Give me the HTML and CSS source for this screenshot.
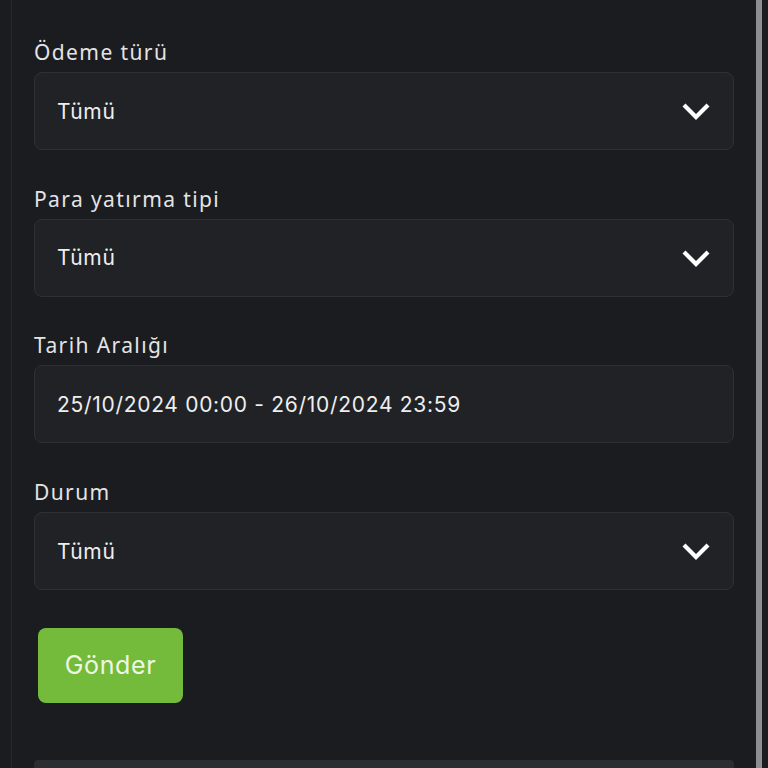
FILE: index.html
```html
<!DOCTYPE html>
<html lang="tr">
<head>
<meta charset="utf-8">
<link rel="stylesheet" href="styles.css">
</head>
<body>
<div class="page">
  <main class="main">
    <form class="form">
      <div class="group">
        <label class="label">Ödeme türü</label>
        <div class="field">
          <span class="value">Tümü</span>
          <svg class="chev" width="30" height="18" viewBox="0 0 30 18"><path d="M3 3 L15 15 L27 3" fill="none" stroke="#ffffff" stroke-width="4.2" stroke-linejoin="miter"/></svg>
        </div>
      </div>
      <div class="group">
        <label class="label">Para yatırma tipi</label>
        <div class="field">
          <span class="value">Tümü</span>
          <svg class="chev" width="30" height="18" viewBox="0 0 30 18"><path d="M3 3 L15 15 L27 3" fill="none" stroke="#ffffff" stroke-width="4.2" stroke-linejoin="miter"/></svg>
        </div>
      </div>
      <div class="group">
        <label class="label">Tarih Aralığı</label>
        <div class="field">
          <span class="value">25/10/2024 00:00 - 26/10/2024 23:59</span>
        </div>
      </div>
      <div class="group">
        <label class="label">Durum</label>
        <div class="field">
          <span class="value">Tümü</span>
          <svg class="chev" width="30" height="18" viewBox="0 0 30 18"><path d="M3 3 L15 15 L27 3" fill="none" stroke="#ffffff" stroke-width="4.2" stroke-linejoin="miter"/></svg>
        </div>
      </div>
      <button type="button" class="submit">Gönder</button>
      <div class="next-box"></div>
    </form>
  </main>
  <div class="scroll-track"><div class="scroll-thumb"></div></div>
</div>
</body>
</html>
```

FILE: styles.css
```css
html, body {
  margin: 0;
  padding: 0;
  background: #1a1c20;
  height: 768px;
  overflow: hidden;
}
.page {
  display: flex;
  height: 768px;
}
.main {
  flex: 1;
  margin-left: 11px;
  border-left: 1px solid #26292d;
  background: #1a1c20;
}
.form {
  padding: 0 22px;
  padding-top: 38px;
  display: flex;
  flex-direction: column;
}
.group {
  display: flex;
  flex-direction: column;
  margin-bottom: 34.7px;
}
.label {
  font-family: "Noto Sans", "Open Sans", sans-serif;
  font-size: 21px;
  line-height: 28px;
  letter-spacing: 1.4px;
  color: #e4e4e6;
  margin-bottom: 6px;
}
.field {
  height: 76px;
  border: 1px solid #2d3034;
  border-radius: 8px;
  background: #202226;
  display: flex;
  align-items: center;
  justify-content: space-between;
  padding: 0 22px 0 22px;
}
.value {
  font-family: "Inter", "Roboto", sans-serif;
  font-size: 21px;
  letter-spacing: 0.7px;
  color: #eeeeef;
}
.chev {
  display: block;
}
.submit {
  align-self: flex-start;
  margin: 3px 0 0 4px;
  width: 145px;
  height: 75px;
  border: none;
  border-radius: 8px;
  background: #74bb3c;
  color: #eef7e4;
  font-family: "Inter", "Roboto", sans-serif;
  font-size: 25px;
  letter-spacing: 0.6px;
  padding: 0;
}
.next-box {
  margin-top: 57px;
  height: 8px;
  background: #2a2d31;
  border-radius: 4px 4px 0 0;
}
.scroll-track {
  width: 12px;
  background: #1a1c20;
}
.scroll-thumb {
  width: 6px;
  height: 768px;
  background: #8e8e92;
}
```
